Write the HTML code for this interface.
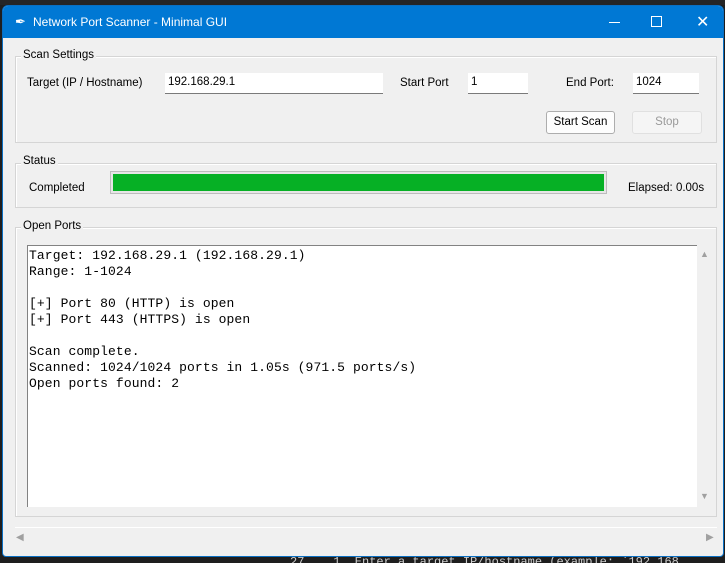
<!DOCTYPE html>
<html><head><style>
*{margin:0;padding:0;box-sizing:border-box}
html,body{width:725px;height:563px;overflow:hidden}
body{background:#1e1e1e;position:relative;font-family:"Liberation Sans",sans-serif;font-size:11.5px;color:#000}
.a{position:absolute}
.win{left:2px;top:5px;width:722px;height:552px;background:#f0f0f0;border:1px solid #0a6fc2;border-radius:6px 6px 4px 4px;overflow:hidden}
.title{left:0;top:0;width:722px;height:32px;background:#0078d4;color:#fff;font-size:12px}
.frame{border:1px solid #d5d5d5;box-shadow:inset 1px 1px 0 #fff}
.lbl{background:#f0f0f0;padding:0 2px}
.entry{background:#fff;border-bottom:1px solid #7a7a7a;height:21px;padding:3px 3px}
.btn{border:1px solid #adadad;background:#fdfdfd;border-radius:3px;text-align:center;line-height:21px;height:23px}
.mono{font-family:"Liberation Mono",monospace;font-size:13px;letter-spacing:0.1px;line-height:16px;white-space:pre}
</style></head><body>
<div class="a" style="left:0;top:0;width:725px;height:5px;background:#252526"></div>
<div class="a" style="left:0;top:556px;width:725px;height:7px;overflow:hidden"><div class="a" style="left:290px;top:-1px;color:#ccc;font-family:'Liberation Mono',monospace;font-size:12px;line-height:14px;white-space:pre">27    1. Enter a target IP/hostname (example: `192.168</div></div>
<div class="a win">
 <div class="a title">
  <div class="a" style="left:12px;top:8px;font-size:13px">&#x2712;</div>
  <div class="a" style="left:30px;top:9px">Network Port Scanner - Minimal GUI</div>
  <div class="a" style="left:606px;top:16px;width:11px;height:1px;background:#fff"></div>
  <div class="a" style="left:648px;top:10px;width:11px;height:11px;border:1px solid #fff"></div>
  <div class="a" style="left:693px;top:6px;font-size:16px">✕</div>
 </div>
 <div class="a frame" style="left:12px;top:50px;width:702px;height:87px"></div>
 <div class="a lbl" style="left:18px;top:43px">Scan Settings</div>
 <div class="a" style="left:24px;top:71px">Target (IP / Hostname)</div>
 <div class="a entry" style="left:162px;top:67px;width:218px">192.168.29.1</div>
 <div class="a" style="left:397px;top:71px">Start Port</div>
 <div class="a entry" style="left:465px;top:67px;width:60px">1</div>
 <div class="a" style="left:563px;top:71px">End Port:</div>
 <div class="a entry" style="left:630px;top:67px;width:66px">1024</div>
 <div class="a btn" style="left:543px;top:105px;width:69px">Start Scan</div>
 <div class="a btn" style="left:629px;top:105px;width:70px;border-color:#e0e0e0;color:#9a9a9a;background:#f5f5f5">Stop</div>
 <div class="a frame" style="left:12px;top:157px;width:702px;height:45px"></div>
 <div class="a lbl" style="left:18px;top:149px">Status</div>
 <div class="a" style="left:26px;top:176px">Completed</div>
 <div class="a" style="left:107px;top:165px;width:497px;height:23px;border:1px solid #bcbcbc;background:#e6e6e6;padding:2px"><div style="width:100%;height:100%;background:#06b025"></div></div>
 <div class="a" style="left:625px;top:176px">Elapsed: 0.00s</div>
 <div class="a frame" style="left:12px;top:221px;width:702px;height:290px"></div>
 <div class="a lbl" style="left:18px;top:214px">Open Ports</div>
 <div class="a" style="left:24px;top:239px;width:671px;height:262px;background:#fff;border-left:1px solid #828282;border-top:1px solid #828282"></div>
 <div class="a mono" style="left:26px;top:242px">Target: 192.168.29.1 (192.168.29.1)
Range: 1-1024

[+] Port 80 (HTTP) is open
[+] Port 443 (HTTPS) is open

Scan complete.
Scanned: 1024/1024 ports in 1.05s (971.5 ports/s)
Open ports found: 2</div>
 <div class="a" style="left:694px;top:239px;width:16px;height:262px;background:#f0f0f0"></div>
 <div class="a" style="left:697px;top:243px;color:#a0a0a0;font-size:9px">▲</div>
 <div class="a" style="left:697px;top:485px;color:#a0a0a0;font-size:9px">▼</div>
 <div class="a" style="left:12px;top:521px;width:702px;height:1px;background:#fff"></div>
 <div class="a" style="left:13px;top:526px;color:#a0a0a0;font-size:10px">◀</div>
 <div class="a" style="left:703px;top:526px;color:#a0a0a0;font-size:10px">▶</div>
</div>
</body></html>
